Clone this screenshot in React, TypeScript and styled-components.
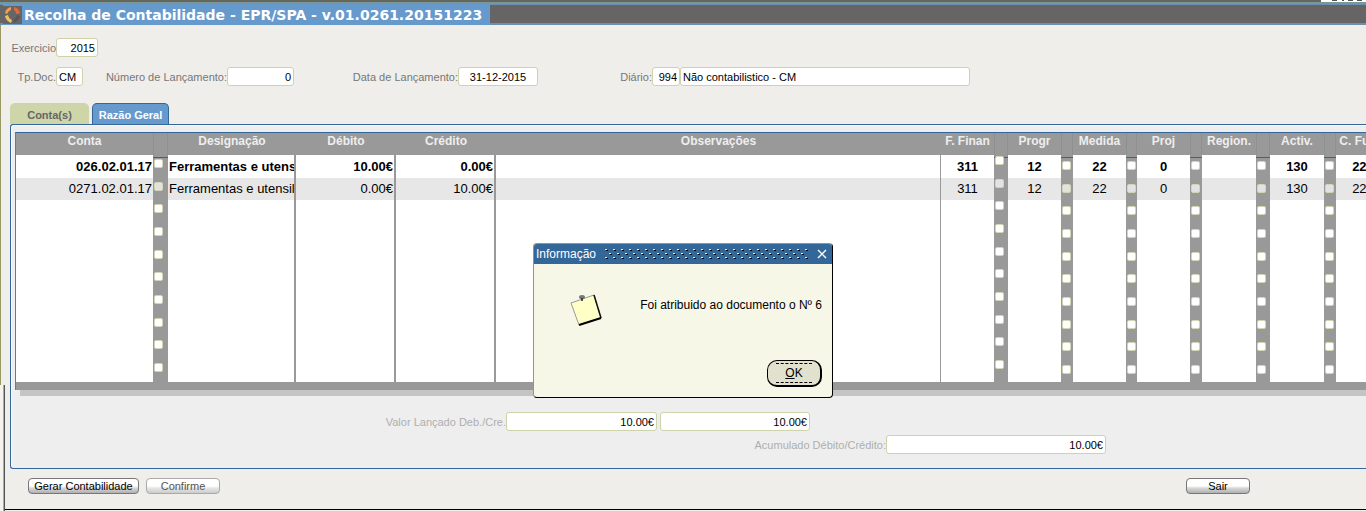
import React from "react";
import styled, { createGlobalStyle, css } from "styled-components";

const GlobalStyle = createGlobalStyle`
  * { box-sizing: border-box; }
  html, body, #root { min-height: 100vh; }
  body {
    margin: 0;
    background: #efeeea;
    font-family: "Liberation Sans", Arial, sans-serif;
    font-size: 11px;
    color: #000;
    overflow: hidden;
  }
`;

const Window = styled.div`
  position: relative;
  min-height: 100vh;
  display: flex;
  flex-direction: column;
  overflow: hidden;
`;

const Header = styled.header`
  height: 25px;
  display: flex;
  flex-direction: column;
  background: #7a9796;
`;

const TopStrip = styled.div`
  height: 2px;
  background: #646660;
  display: flex;
  justify-content: flex-end;
  svg { display: block; }
`;

const TitleBar = styled.div`
  flex: 1;
  margin-top: 2px;
  padding-left: 3px;
  background: linear-gradient(#6b8fae 1px, #666464 1px, #666464 19px, #6c8eb0 19px);
  display: flex;
`;

const Title = styled.h1`
  margin: 0;
  padding-right: 8px;
  display: flex;
  align-items: center;
  gap: 2px;
  background: #6699cc;
  color: #fff;
  font: bold 14px/20px "DejaVu Sans", Verdana, sans-serif;
  white-space: nowrap;
`;

const Main = styled.div`
  flex: 1;
  display: flex;
`;

const Rail = styled.div`
  width: 5px;
  display: flex;
  flex-direction: column;
`;

const RailTop = styled.div`
  flex: 1;
  border-left: 1px solid #999966;
`;

const RailBottom = styled.div`
  height: 126px;
  border-right: 1px solid #555;
  background: linear-gradient(90deg, #f4f3ee 3px, #aaa 3px);
`;

const Form = styled.main`
  flex: 1;
  min-width: 0;
  margin-bottom: 1px;
  border-bottom: 1px solid #000;
  display: flex;
  flex-direction: column;
`;

const Row = styled.div<{ $start: number; $top?: number }>`
  display: flex;
  align-items: center;
  height: 19px;
  margin-top: ${(p) => p.$top ?? 0}px;
  padding-left: ${(p) => p.$start}px;
`;

const Field = styled.label<{ $width: number; $dim?: boolean; $gap?: number }>`
  display: flex;
  align-items: center;
  justify-content: flex-end;
  flex: none;
  width: ${(p) => p.$width}px;
  margin-left: ${(p) => p.$gap ?? 0}px;
  color: ${(p) => (p.$dim ? "#aeaeae" : "#777")};
  white-space: nowrap;
`;

const TextBox = styled.input<{ $width: number; $align?: string }>`
  flex: none;
  width: ${(p) => p.$width}px;
  height: 19px;
  padding: 0 2px;
  border: 1px solid #cfd3ab;
  border-radius: 3px;
  background: #fff;
  color: #000;
  font: 11px "Liberation Sans", Arial, sans-serif;
  text-align: ${(p) => p.$align ?? "left"};
  outline: none;
`;

const Tabs = styled.div`
  display: flex;
  align-items: flex-end;
  gap: 3px;
  height: 22px;
  margin-top: 16px;
  padding-left: 5px;
`;

const Tab = styled.button<{ $active?: boolean }>`
  height: 21px;
  padding: 2px 0 0;
  border: 0;
  border-radius: 5px 5px 0 0;
  font: bold 11px/18px "Liberation Sans", Arial, sans-serif;
  ${(p) =>
    p.$active
      ? css`
          width: 77px;
          border: 1px solid #336699;
          border-bottom: 0;
          background: #6699cc;
          color: #fff;
        `
      : css`
          width: 79px;
          background: #cdd5a9;
          color: #666;
        `}
`;

const Panel = styled.section`
  height: 345px;
  margin-left: 5px;
  padding: 7px 0 0 4px;
  border: 1px solid #336699;
  border-right: 0;
  border-radius: 3px 0 0 3px;
  background: #eee;
  box-shadow: inset 1px 1px #f8fbfb;
  overflow: hidden;
`;

const GridFrame = styled.div`
  padding-bottom: 8px;
  border-top: 1px solid #336699;
  border-left: 1px solid #777;
  background: #999;
`;

const GridShadow = styled.div`
  height: 6px;
  margin-left: 5px;
  background: #c4c4c4;
`;

const Ledger = styled.table`
  width: calc(100% + 24px);
  table-layout: fixed;
  border-collapse: separate;
  border-spacing: 0;
  background: #fff;
  font-size: 13px;
`;

const Head = styled.th<{ $gutter?: boolean }>`
  height: 22px;
  padding: 0 0 6px;
  background: #999;
  color: #eee;
  font-size: 12px;
  line-height: 16px;
  white-space: nowrap;
  ${(p) => p.$gutter && css`border: solid #8d9090; border-width: 0 1px;`}
`;

const Line = styled.tr`
  height: 23px;
  &:nth-child(3n + 2) { height: 22px; }
  &:nth-child(1) { font-weight: bold; }
  &:nth-child(2) { background: #e7e7e7; }
`;

const Cell = styled.td<{ $align: string; $rule: number }>`
  padding: 0 1px;
  border-right: ${(p) => p.$rule}px solid #999;
  text-align: ${(p) => p.$align};
  line-height: 20px;
  white-space: nowrap;
  overflow: hidden;
`;

const Gutter = styled.td<{ $drop: number }>`
  padding: ${(p) => p.$drop}px 0 0 1px;
  background: #999;
  vertical-align: top;
  line-height: 0;
  ${Line}:nth-child(1) & {
    background: linear-gradient(#999 2px, #336699 2px, #336699 3px, #999 3px);
  }
`;

const Mark = styled.input`
  appearance: none;
  display: block;
  width: 9px;
  height: 9px;
  margin: 0;
  border: 1px solid #d3d6b4;
  border-radius: 2px;
  background: #fff;
  ${Line}:nth-child(2) & { background: #e2e2e2; }
`;

const Actions = styled.footer`
  display: flex;
  align-items: center;
  height: 18px;
  margin-top: 8px;
  padding: 0 116px 0 23px;
  gap: 7px;
`;

const PushButton = styled.button<{ $width: number; $last?: boolean }>`
  width: ${(p) => p.$width}px;
  height: 16px;
  padding: 0;
  margin-left: ${(p) => (p.$last ? "auto" : "0")};
  border: 1px solid #777;
  border-radius: 4px;
  background: linear-gradient(#fff 50%, #d8d8d8 65%, #b0b0b0);
  color: #000;
  font: 11px/14px "Liberation Sans", Arial, sans-serif;
  &:disabled {
    border-color: #aaa;
    color: #555;
    background: linear-gradient(#fff 50%, #e6e6e6 65%, #ccc);
  }
`;

const Overlay = styled.div`
  position: absolute;
  inset: 0;
  padding-top: 243px;
  display: flex;
  justify-content: center;
  align-items: flex-start;
`;

const Dialog = styled.div`
  width: 300px;
  height: 155px;
  border: 1px solid;
  border-color: #999966 #000 #000 #999966;
  border-radius: 4px;
  background: #f7f7e7;
  font-size: 12px;
  overflow: hidden;
`;

const DialogBar = styled.div`
  display: flex;
  align-items: center;
  gap: 9px;
  height: 20px;
  padding: 0 5px 0 2px;
  background: #336699;
  color: #fff;
`;

const DialogTitle = styled.h2`
  margin: 0;
  font-size: 12px;
  font-weight: normal;
`;

const Grip = styled.svg`
  flex: 1;
  min-width: 0;
  height: 12px;
`;

const Close = styled.button`
  width: 10px;
  height: 10px;
  padding: 0;
  border: 0;
  background: none;
  svg { display: block; }
`;

const Message = styled.div`
  display: flex;
  justify-content: space-between;
  padding: 30px 10px 0 36px;
  height: 94px;
  p { margin: 3px 0 0; line-height: 16px; }
`;

const OkButton = styled.button`
  display: block;
  width: 55px;
  height: 27px;
  margin: 2px 10px 0 auto;
  padding: 2px 8px;
  border: 1px solid #000;
  border-width: 1px 2px 2px 1px;
  border-radius: 10px;
  background: #e1e1cd;
  font: 12px "Liberation Sans", Arial, sans-serif;
  color: #000;
  span {
    display: block;
    border: dashed #000;
    border-width: 1px 0;
    line-height: 18px;
  }
`;

type Column = {
  title: string;
  width?: number;
  align: string;
  rule: number;
  gutter?: number;
  drop?: number;
  values: string[];
};

const columns: Column[] = [
  { title: "Conta", width: 137, align: "right", rule: 0, gutter: 15, drop: 4, values: ["026.02.01.17", "0271.02.01.17"] },
  { title: "Designação", width: 128, align: "left", rule: 2, values: ["Ferramentas e utensilios", "Ferramentas e utensilios"] },
  { title: "Débito", width: 100, align: "right", rule: 2, values: ["10.00€", "0.00€"] },
  { title: "Crédito", width: 100, align: "right", rule: 2, values: ["0.00€", "10.00€"] },
  { title: "Observações", align: "left", rule: 1, values: [] },
  { title: "F. Finan", width: 53, align: "center", rule: 0, gutter: 14, drop: 1, values: ["311", "311"] },
  { title: "Progr", width: 53, align: "center", rule: 0, gutter: 12, drop: 6, values: ["12", "12"] },
  { title: "Medida", width: 53, align: "center", rule: 0, gutter: 11, drop: 6, values: ["22", "22"] },
  { title: "Proj", width: 53, align: "center", rule: 0, gutter: 12, drop: 6, values: ["0", "0"] },
  { title: "Region.", width: 54, align: "center", rule: 0, gutter: 14, drop: 6, values: [] },
  { title: "Activ.", width: 54, align: "center", rule: 0, gutter: 12, drop: 6, values: ["130", "130"] },
  { title: "C. Func.", width: 54, align: "center", rule: 0, values: ["220", "220"] },
];

const rows = Array.from({ length: 10 }, (_, i) => i);

const Logo = () => (
  <svg width="19" height="18" viewBox="0 0 19 18" aria-hidden="true">
    <rect width="19" height="18" fill="#666" />
    <path d="M8 1 Q3 2 2 7 L4 8 Q5 5 8 4Z" fill="#f0a04c" />
    <path d="M11 1 Q16 2 17 7 L13 8 Q13 5 11 4Z" fill="#e0683c" />
    <path d="M2 10 Q3 15 8 17 L9 14 Q6 13 5 9Z" fill="#f2c063" />
    <path d="M17 10 Q16 15 11 17 L10 14 Q13 13 14 9Z" fill="#5c5654" />
  </svg>
);

const Note = () => (
  <svg width="33" height="33" viewBox="0 0 33 33" aria-hidden="true">
    <path d="M1 9 L24 1 L31 24 L9 31Z" fill="#ffffc8" stroke="#999" />
    <path d="M24 1 L31 24" fill="none" stroke="#111" strokeWidth="1.5" />
    <path d="M31 24 L9 31" fill="none" stroke="#000" strokeWidth="2" />
    <ellipse cx="12" cy="3" rx="3" ry="2" fill="#777" />
    <path d="M12 4 V7" stroke="#222" strokeWidth="1.5" />
  </svg>
);

export default function App() {
  return (
    <Window>
      <GlobalStyle />
      <Header>
        <TopStrip>
          <svg width="45" height="2" aria-hidden="true">
            <rect width="45" height="2" fill="#fff" />
            <path d="M11 0.5h5M21 0.5h2M27 0.5h5M36 0.5h5" stroke="#555" />
          </svg>
        </TopStrip>
        <TitleBar>
          <Title>
            <Logo />
            Recolha de Contabilidade - EPR/SPA - v.01.0261.20151223
          </Title>
        </TitleBar>
      </Header>
      <Main>
        <Rail>
          <RailTop />
          <RailBottom />
        </Rail>
        <Form>
          <Row $start={5} $top={13}>
            <Field $width={88}>
              Exercicio
              <TextBox $width={42} $align="right" defaultValue="2015" />
            </Field>
          </Row>
          <Row $start={5} $top={10}>
            <Field $width={73}>
              Tp.Doc.
              <TextBox $width={27} defaultValue="CM" />
            </Field>
            <Field $width={191} $gap={20}>
              Número de Lançamento:
              <TextBox $width={67} $align="right" defaultValue="0" />
            </Field>
            <Field $width={190} $gap={54}>
              Data de Lançamento:
              <TextBox $width={80} $align="center" defaultValue="31-12-2015" />
            </Field>
            <Field $width={66} $gap={76}>
              Diário:
              <TextBox $width={28} $align="right" defaultValue="994" />
            </Field>
            <TextBox $width={290} aria-label="Descrição do diário" defaultValue="Não contabilistico - CM" />
          </Row>
          <Tabs role="tablist">
            <Tab role="tab">Conta(s)</Tab>
            <Tab role="tab" aria-selected $active>
              Razão Geral
            </Tab>
          </Tabs>
          <Panel>
            <GridFrame>
              <Ledger>
                <colgroup>
                  {columns.map((c) => (
                    <React.Fragment key={c.title}>
                      <col width={c.width} />
                      {c.gutter && <col width={c.gutter} />}
                    </React.Fragment>
                  ))}
                </colgroup>
                <thead>
                  <tr>
                    {columns.map((c) => (
                      <React.Fragment key={c.title}>
                        <Head scope="col">{c.title}</Head>
                        {c.gutter && <Head as="td" $gutter />}
                      </React.Fragment>
                    ))}
                  </tr>
                </thead>
                <tbody>
                  {rows.map((i) => (
                    <Line key={i}>
                      {columns.map((c) => (
                        <React.Fragment key={c.title}>
                          <Cell $align={c.align} $rule={c.rule}>
                            {c.values[i]}
                          </Cell>
                          {c.gutter && (
                            <Gutter $drop={c.drop ?? 0}>
                              <Mark type="checkbox" aria-label={`${c.title} ${i + 1}`} />
                            </Gutter>
                          )}
                        </React.Fragment>
                      ))}
                    </Line>
                  ))}
                </tbody>
              </Ledger>
            </GridFrame>
            <GridShadow />
            <Row $start={370} $top={16}>
              <Field $width={272} $dim>
                Valor Lançado Deb./Cre.
                <TextBox $width={151} $align="right" defaultValue="10.00€" />
              </Field>
              <Field $width={150} $gap={3}>
                <TextBox $width={150} $align="right" aria-label="Valor lançado a crédito" defaultValue="10.00€" />
              </Field>
            </Row>
            <Row $start={740} $top={4}>
              <Field $width={351} $dim>
                Acumulado Débito/Crédito:
                <TextBox $width={220} $align="right" defaultValue="10.00€" />
              </Field>
            </Row>
          </Panel>
          <Actions>
            <PushButton $width={111}>Gerar Contabilidade</PushButton>
            <PushButton $width={74} disabled>
              Confirme
            </PushButton>
            <PushButton $width={64} $last>
              Sair
            </PushButton>
          </Actions>
        </Form>
      </Main>
      <Overlay>
        <Dialog role="dialog" aria-label="Informação">
          <DialogBar>
            <DialogTitle>Informação</DialogTitle>
            <Grip aria-hidden="true">
              <defs>
                <pattern id="grip" width="8" height="8" patternUnits="userSpaceOnUse">
                  <path d="M0 1h2v1h-2zM4 5h2v1h-2z" fill="#dde6ee" />
                  <path d="M1 2h2v1h-2zM5 6h2v1h-2z" fill="#000" />
                </pattern>
              </defs>
              <rect width="100%" height="12" fill="url(#grip)" />
            </Grip>
            <Close aria-label="Fechar">
              <svg width="10" height="10" viewBox="0 0 10 10" stroke="#fff" strokeWidth="1.4">
                <path d="M1 1 L9 9 M9 1 L1 9" />
              </svg>
            </Close>
          </DialogBar>
          <Message>
            <Note />
            <p>Foi atribuido ao documento o Nº 6</p>
          </Message>
          <OkButton>
            <span>
              <u>O</u>K
            </span>
          </OkButton>
        </Dialog>
      </Overlay>
    </Window>
  );
}
